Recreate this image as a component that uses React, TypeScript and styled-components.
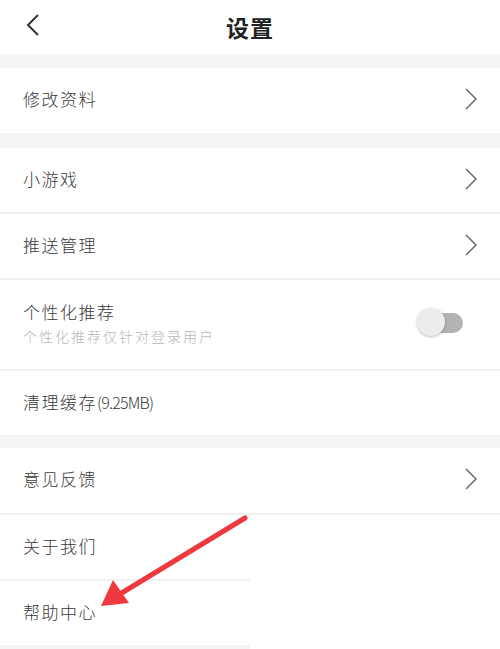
import React from "react";
import styled, { createGlobalStyle } from "styled-components";

const GlobalStyle = createGlobalStyle`
    html, body {
        margin: 0;
        padding: 0;
        background: #ffffff;
    }
    body {
        font-family: "Noto Sans CJK SC", "Noto Sans", sans-serif;
    }
`;

const Page = styled.div`
    position: relative;
    width: 500px;
    height: 649px;
    overflow: hidden;
    background: #ffffff;
`;

const Header = styled.div`
    height: 54px;
    display: flex;
    align-items: center;
    justify-content: center;
    position: relative;
`;

const BackButton = styled.span`
    position: absolute;
    left: 25px;
    top: 13px;
    display: flex;
`;

const Title = styled.h1`
    margin: 0;
    font-size: 23px;
    font-weight: 700;
    color: #222;
    letter-spacing: 1px;
`;

const Gap = styled.div<{ $h: number; $w?: string }>`
    height: ${({ $h }) => $h}px;
    width: ${({ $w }) => $w || "100%"};
    background: #f5f5f5;
`;

const Row = styled.div<{ $h?: number }>`
    height: ${({ $h }) => $h || 64}px;
    display: flex;
    align-items: center;
    justify-content: space-between;
    padding: 0 22px 3px 23px;
    box-sizing: border-box;
`;

const Divider = styled.div<{ $w?: string }>`
    height: 2px;
    width: ${({ $w }) => $w || "100%"};
    background: #f1f1f1;
`;

const Texts = styled.div`
    display: flex;
    flex-direction: column;
    gap: 4px;
`;

const Label = styled.span`
    font-size: 17px;
    font-weight: 300;
    color: #3a3a3a;
    letter-spacing: 1.5px;
    line-height: 22px;
`;

const Latin = styled.span`
    font-size: 16px;
    letter-spacing: -0.8px;
`;

const SubLabel = styled.span`
    font-size: 14px;
    font-weight: 300;
    color: #b8b8b8;
    letter-spacing: 2px;
    line-height: 18px;
`;

const Toggle = styled.div`
    position: relative;
    width: 46px;
    height: 30px;
    margin-right: 15px;
`;

const Track = styled.div`
    position: absolute;
    right: 0;
    top: 5px;
    width: 32px;
    height: 20px;
    border-radius: 10px;
    background: #b3b3b3;
`;

const Knob = styled.div`
    position: absolute;
    left: 0;
    top: 0;
    width: 28px;
    height: 28px;
    border-radius: 50%;
    background: #ececec;
    box-shadow: 0 1px 3px rgba(0, 0, 0, 0.25);
`;

const Arrow = styled.svg`
    position: absolute;
    left: 0;
    top: 0;
    pointer-events: none;
`;

const Chevron = () => (
    <svg width="14" height="22" viewBox="0 0 14 22">
        <path d="M2 1 L12 11 L2 21" fill="none" stroke="#6a6a6a" strokeWidth="1.5" />
    </svg>
);

const items = [
    { label: "小游戏", chevron: true },
    { label: "推送管理", chevron: true },
];

const App = () => {
    return (
        <Page>
            <GlobalStyle />
            <Header>
                <BackButton>
                    <svg width="16" height="24" viewBox="0 0 16 24">
                        <path d="M13 2 L3 12 L13 22" fill="none" stroke="#333" strokeWidth="2" />
                    </svg>
                </BackButton>
                <Title>设置</Title>
            </Header>
            <Gap $h={14} />
            <Row $h={65}>
                <Label>修改资料</Label>
                <Chevron />
            </Row>
            <Gap $h={15} />
            {items.map((it) => (
                <React.Fragment key={it.label}>
                    <Row $h={64}>
                        <Label>{it.label}</Label>
                        <Chevron />
                    </Row>
                    <Divider />
                </React.Fragment>
            ))}
            <Row $h={89}>
                <Texts>
                    <Label>个性化推荐</Label>
                    <SubLabel>个性化推荐仅针对登录用户</SubLabel>
                </Texts>
                <Toggle>
                    <Track />
                    <Knob />
                </Toggle>
            </Row>
            <Divider />
            <Row $h={64}>
                <Label>清理缓存<Latin>(9.25MB)</Latin></Label>
            </Row>
            <Gap $h={13} />
            <Row $h={65}>
                <Label>意见反馈</Label>
                <Chevron />
            </Row>
            <Divider />
            <Row $h={64}>
                <Label>关于我们</Label>
            </Row>
            <Divider $w="250px" />
            <Row $h={64}>
                <Label>帮助中心</Label>
            </Row>
            <Gap $h={8} $w="250px" />
            <Arrow width="500" height="649" viewBox="0 0 500 649">
                <line x1="245" y1="518" x2="120" y2="594" stroke="#ee3a3f" strokeWidth="5" strokeLinecap="round" />
                <polygon points="101,606 113,580 129,603" fill="#ee3a3f" />
            </Arrow>
        </Page>
    );
};

export default App;
